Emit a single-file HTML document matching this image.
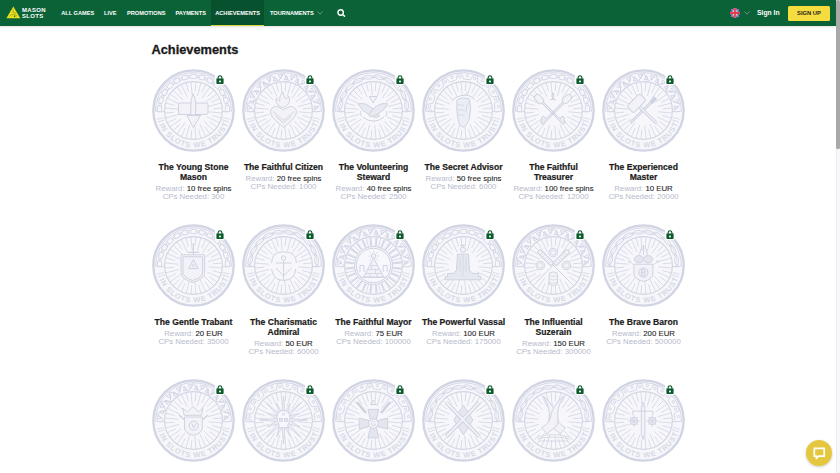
<!DOCTYPE html>
<html><head><meta charset="utf-8"><style>
*{margin:0;padding:0;box-sizing:border-box}
html,body{width:840px;height:473px;overflow:hidden;background:#fff;font-family:"Liberation Sans",sans-serif}
.nav{position:absolute;left:0;top:0;width:836px;height:25.8px;background:#0b6237;box-shadow:0 1px 2px rgba(0,0,0,0.12)}
.nav .it{position:absolute;top:0;height:25px;line-height:26px;color:#fff;font-weight:700;font-size:5.65px;white-space:nowrap}
.act{position:absolute;left:210.8px;top:0;width:53.7px;height:25.9px;background:#07512e;border-bottom:1px solid #d6d63c}
.h1{position:absolute;left:151.5px;top:42px;font-size:12.8px;font-weight:700;color:#1a1a1a;white-space:nowrap}
.card{position:absolute;width:90px;height:160px;text-align:center}
.card .b{position:absolute;left:3.5px;top:0}
.card .lock{position:absolute;left:66.5px;top:4.6px;background:#fff;border-radius:2px;padding:1px;box-sizing:content-box}
.card .txt{position:absolute;left:0;top:93.8px;width:90px}
.card .t{font-size:8.6px;line-height:9.8px;font-weight:700;color:#1b1b1b}
.card .r{margin-top:2.5px}
.card .r,.card .c{font-size:7.8px;line-height:8px;color:#262626;white-space:nowrap}
.card .r span,.card .c{color:#b6bacb}
.card .r b{font-weight:400;-webkit-text-stroke:0.1px #262626}
.card .t{-webkit-text-stroke:0.2px #1b1b1b}
.h1{-webkit-text-stroke:0.3px #1a1a1a}
.scr{position:absolute;left:836px;top:0;width:4px;height:473px;background:#f7f7fa;border-left:0.5px solid #ececf0}
.thumb{position:absolute;left:836.3px;top:0;width:3.7px;height:149px;background:#a9a9a9;border-radius:1.5px}
</style></head><body>
<svg width="0" height="0" style="position:absolute">
<defs>
<g id="base" fill="none" stroke="#d1d4e3">
<circle cx="41.5" cy="41.5" r="40.2" fill="#f7f7fb" stroke-width="2.3"/>
<path d="M3.6 41.5A37.9 37.9 0 0 1 79.4 41.5" stroke-width="0.9"/>
<circle cx="41.5" cy="41.5" r="28.9" stroke-width="1.1"/>
<path d="M56.44 42.81L69.89 43.98M60.34 46.55L69.03 48.88M55.09 47.84L67.33 53.54M57.47 52.68L64.85 57.85M52.11 52.11L61.65 61.65M52.68 57.47L57.85 64.85M47.84 55.09L53.54 67.33M46.55 60.34L48.88 69.03M42.81 56.44L43.98 69.89M39.80 60.93L39.02 69.89M37.62 55.99L34.12 69.03M33.26 59.17L29.46 67.33M32.90 53.79L25.15 64.85M27.71 55.29L21.35 61.65M29.21 50.10L18.15 57.85M23.83 49.74L15.67 53.54M27.01 45.38L13.97 48.88M22.07 43.20L13.11 43.98M26.56 40.19L13.11 39.02M22.66 36.45L13.97 34.12M27.91 35.16L15.67 29.46M25.53 30.32L18.15 25.15M30.89 30.89L21.35 21.35M30.32 25.53L25.15 18.15M35.16 27.91L29.46 15.67M36.45 22.66L34.12 13.97M40.19 26.56L39.02 13.11M43.20 22.07L43.98 13.11M45.38 27.01L48.88 13.97M49.74 23.83L53.54 15.67M50.10 29.21L57.85 18.15M55.29 27.71L61.65 21.35M53.79 32.90L64.85 25.15M59.17 33.26L67.33 29.46M55.99 37.62L69.03 34.12M60.93 39.80L69.89 39.02" stroke-width="0.8"/>
<path d="M3 41.8Q8 43.5 12.8 42.5M80 41.8Q75 43.5 70.2 42.5" stroke-width="1"/>
<path d="M12.97 50.77L6.03 53.03M12.33 48.50L5.23 50.21M70.03 50.77L76.97 53.03M70.67 48.50L77.77 50.21" stroke-width="0.8"/>
<path id="tp" d="M5.24 48.88A37.0 37.0 0 0 0 78.09 46.97" stroke="none"/>
<text font-family="Liberation Sans" font-weight="700" font-size="7.5" letter-spacing="0.75" fill="#d6d8e6" stroke="none"><textPath href="#tp" startOffset="50%" text-anchor="middle">IN SLOTS WE TRUST</textPath></text>
</g>
<g id="chain" fill="none" stroke="#d1d4e3" stroke-width="0.9"><rect x="4.65" y="37.62" width="5.8" height="4.2" rx="1.2" fill="#f7f7fb" transform="rotate(273.0 7.55 39.72)"/><ellipse cx="8.04" cy="35.45" rx="1.5" ry="1.3" transform="rotate(273.0 8.04 35.45)"/><rect x="6.17" y="29.18" width="5.8" height="4.2" rx="1.2" fill="#f7f7fb" transform="rotate(287.5 9.07 31.28)"/><ellipse cx="10.62" cy="27.27" rx="1.5" ry="1.3" transform="rotate(287.5 10.62 27.27)"/><rect x="9.77" y="21.38" width="5.8" height="4.2" rx="1.2" fill="#f7f7fb" transform="rotate(302.0 12.67 23.48)"/><ellipse cx="15.17" cy="19.99" rx="1.5" ry="1.3" transform="rotate(302.0 15.17 19.99)"/><rect x="15.20" y="14.74" width="5.8" height="4.2" rx="1.2" fill="#f7f7fb" transform="rotate(316.5 18.10 16.84)"/><ellipse cx="21.40" cy="14.08" rx="1.5" ry="1.3" transform="rotate(316.5 21.40 14.08)"/><rect x="22.12" y="9.66" width="5.8" height="4.2" rx="1.2" fill="#f7f7fb" transform="rotate(331.0 25.02 11.76)"/><ellipse cx="28.90" cy="9.92" rx="1.5" ry="1.3" transform="rotate(331.0 28.90 9.92)"/><rect x="30.09" y="6.48" width="5.8" height="4.2" rx="1.2" fill="#f7f7fb" transform="rotate(345.5 32.99 8.58)"/><ellipse cx="37.21" cy="7.77" rx="1.5" ry="1.3" transform="rotate(345.5 37.21 7.77)"/><rect x="38.60" y="5.40" width="5.8" height="4.2" rx="1.2" fill="#f7f7fb" transform="rotate(360.0 41.50 7.50)"/><ellipse cx="45.79" cy="7.77" rx="1.5" ry="1.3" transform="rotate(360.0 45.79 7.77)"/><rect x="47.11" y="6.48" width="5.8" height="4.2" rx="1.2" fill="#f7f7fb" transform="rotate(374.5 50.01 8.58)"/><ellipse cx="54.10" cy="9.92" rx="1.5" ry="1.3" transform="rotate(374.5 54.10 9.92)"/><rect x="55.08" y="9.66" width="5.8" height="4.2" rx="1.2" fill="#f7f7fb" transform="rotate(389.0 57.98 11.76)"/><ellipse cx="61.60" cy="14.08" rx="1.5" ry="1.3" transform="rotate(389.0 61.60 14.08)"/><rect x="62.00" y="14.74" width="5.8" height="4.2" rx="1.2" fill="#f7f7fb" transform="rotate(403.5 64.90 16.84)"/><ellipse cx="67.83" cy="19.99" rx="1.5" ry="1.3" transform="rotate(403.5 67.83 19.99)"/><rect x="67.43" y="21.38" width="5.8" height="4.2" rx="1.2" fill="#f7f7fb" transform="rotate(418.0 70.33 23.48)"/><ellipse cx="72.38" cy="27.27" rx="1.5" ry="1.3" transform="rotate(418.0 72.38 27.27)"/><rect x="71.03" y="29.18" width="5.8" height="4.2" rx="1.2" fill="#f7f7fb" transform="rotate(432.5 73.93 31.28)"/><ellipse cx="74.96" cy="35.45" rx="1.5" ry="1.3" transform="rotate(432.5 74.96 35.45)"/><rect x="72.55" y="37.62" width="5.8" height="4.2" rx="1.2" fill="#f7f7fb" transform="rotate(447.0 75.45 39.72)"/></g>
<g id="tri" fill="none" stroke="#d1d4e3" stroke-width="0.9"><polyline points="12.00,41.50 4.57,34.99 13.78,31.41 9.02,22.75 18.90,22.54 17.40,12.77 26.75,15.95 28.67,6.26 36.38,12.45 41.50,4.00 46.62,12.45 54.33,6.26 56.25,15.95 65.60,12.77 64.10,22.54 73.98,22.75 69.22,31.41 78.43,34.99 71.00,41.50"/><polygon points="5.51,40.62 5.90,36.12 9.82,38.73"/><polygon points="11.11,35.37 12.12,31.61 7.50,32.39"/><polygon points="7.98,28.36 9.89,24.27 12.68,28.06"/><polygon points="15.04,25.35 17.27,22.16 12.67,21.31"/><polygon points="14.50,17.69 17.69,14.50 19.01,19.01"/><polygon points="22.16,17.27 25.35,15.04 21.31,12.67"/><polygon points="24.27,9.89 28.36,7.98 28.06,12.68"/><polygon points="31.61,12.12 35.37,11.11 32.39,7.50"/><polygon points="36.12,5.90 40.62,5.51 38.73,9.82"/><polygon points="42.26,10.51 46.14,10.85 44.57,6.43"/><polygon points="48.62,6.21 52.98,7.38 49.73,10.78"/><polygon points="52.81,12.64 56.34,14.28 56.38,9.60"/><polygon points="60.26,10.77 63.96,13.37 59.74,15.45"/><polygon points="62.00,18.25 64.75,21.00 66.39,16.61"/><polygon points="69.63,19.04 72.23,22.74 67.55,23.26"/><polygon points="68.72,26.66 70.36,30.19 73.40,26.62"/><polygon points="75.62,30.02 76.79,34.38 72.22,33.27"/><polygon points="72.15,36.86 72.49,40.74 76.57,38.43"/></g>
<g id="leaf" fill="none" stroke="#d1d4e3" stroke-width="0.9"><g transform="rotate(287.0 8.31 36.24)"><ellipse cx="8.31" cy="36.24" rx="4.9" ry="1.9"/><path d="M4.11 36.24H12.51" stroke-width="0.5"/></g><g transform="rotate(305.0 11.56 26.25)"><ellipse cx="11.56" cy="26.25" rx="4.9" ry="1.9"/><path d="M7.36 26.25H15.76" stroke-width="0.5"/></g><g transform="rotate(323.0 17.74 17.74)"><ellipse cx="17.74" cy="17.74" rx="4.9" ry="1.9"/><path d="M13.54 17.74H21.94" stroke-width="0.5"/></g><g transform="rotate(341.0 26.25 11.56)"><ellipse cx="26.25" cy="11.56" rx="4.9" ry="1.9"/><path d="M22.05 11.56H30.45" stroke-width="0.5"/></g><g transform="rotate(359.0 36.24 8.31)"><ellipse cx="36.24" cy="8.31" rx="4.9" ry="1.9"/><path d="M32.04 8.31H40.44" stroke-width="0.5"/></g><g transform="rotate(377.0 46.76 8.31)"><ellipse cx="46.76" cy="8.31" rx="4.9" ry="1.9"/><path d="M42.56 8.31H50.96" stroke-width="0.5"/></g><g transform="rotate(395.0 56.75 11.56)"><ellipse cx="56.75" cy="11.56" rx="4.9" ry="1.9"/><path d="M52.55 11.56H60.95" stroke-width="0.5"/></g><g transform="rotate(413.0 65.26 17.74)"><ellipse cx="65.26" cy="17.74" rx="4.9" ry="1.9"/><path d="M61.06 17.74H69.46" stroke-width="0.5"/></g><g transform="rotate(431.0 71.44 26.25)"><ellipse cx="71.44" cy="26.25" rx="4.9" ry="1.9"/><path d="M67.24 26.25H75.64" stroke-width="0.5"/></g><g transform="rotate(449.0 74.69 36.24)"><ellipse cx="74.69" cy="36.24" rx="4.9" ry="1.9"/><path d="M70.49 36.24H78.89" stroke-width="0.5"/></g><circle cx="7.90" cy="41.50" r="1"/><circle cx="9.54" cy="31.12" r="1"/><circle cx="14.32" cy="21.75" r="1"/><circle cx="21.75" cy="14.32" r="1"/><circle cx="31.12" cy="9.54" r="1"/><circle cx="41.50" cy="7.90" r="1"/><circle cx="51.88" cy="9.54" r="1"/><circle cx="61.25" cy="14.32" r="1"/><circle cx="68.68" cy="21.75" r="1"/><circle cx="73.46" cy="31.12" r="1"/><circle cx="75.10" cy="41.50" r="1"/></g>
<g id="greek" fill="none" stroke="#d1d4e3" stroke-width="0.9"><polyline points="10.00,41.50 4.35,39.50 4.84,35.19 10.79,34.49 13.12,27.83 8.90,23.58 11.21,19.91 16.87,21.86 21.86,16.87 19.91,11.21 23.58,8.90 27.83,13.12 34.49,10.79 35.19,4.84 39.50,4.35 41.50,10.00 48.51,10.79 51.72,5.73 55.81,7.16 55.17,13.12 61.14,16.87 66.23,13.71 69.29,16.77 66.13,21.86 69.88,27.83 75.84,27.19 77.27,31.28 72.21,34.49 73.00,41.50" stroke-linejoin="round"/><circle cx="7.71" cy="37.69" r="1.2"/><circle cx="8.28" cy="29.87" r="1.2"/><circle cx="12.71" cy="23.41" r="1.2"/><circle cx="16.61" cy="16.61" r="1.2"/><circle cx="23.41" cy="12.71" r="1.2"/><circle cx="29.87" cy="8.28" r="1.2"/><circle cx="37.69" cy="7.71" r="1.2"/><circle cx="45.44" cy="6.52" r="1.2"/><circle cx="52.73" cy="9.41" r="1.2"/><circle cx="60.23" cy="11.70" r="1.2"/><circle cx="65.54" cy="17.46" r="1.2"/><circle cx="71.30" cy="22.77" r="1.2"/><circle cx="73.59" cy="30.27" r="1.2"/><circle cx="76.48" cy="37.56" r="1.2"/></g>
<g id="lock"><path d="M2.1 4.2V3.1Q2.1 0.7 4 0.7Q5.9 0.7 5.9 3.1V4.2" fill="none" stroke="#0b5a2c" stroke-width="1.1"/><path d="M0.4 3.6H7.6V8.9H0.4Z" fill="#0b5a2c"/><rect x="3.1" y="5.6" width="1.8" height="1.7" fill="#fff"/></g>
<g id="i-trowel" fill="#f2f2f8" stroke="#cfd2e1" stroke-width="1"><rect x="26.5" y="34" width="29.5" height="11.5" rx="1.5"/><path d="M41.2 24.5Q44 30 43.8 37L43.5 46H39L38.7 37Q38.5 30 41.2 24.5Z"/><path d="M35 46.5H48.6L41.2 58.5Z"/></g>
<g id="i-heart" fill="#f2f2f8" stroke="#cfd2e1" stroke-width="1"><path d="M41.4 38.7C35 37 33 33 34.5 29C35.5 31 37 32 38 32C37 28 39 25 41 22.8C41 26 43 28 44 30C45 29 46 28 46.5 27C48.5 31 48 36 41.4 38.7Z"/><path d="M41.4 58.3C36 54 28.5 48 28.5 43C28.5 38.5 33 36.5 36 38C38.5 39 40 40 41.4 41C43 40 44.5 39 47 38C50 36.5 54.4 38.5 54.4 43C54.4 48 47 54 41.4 58.3Z"/><path d="M31 42.5L41.4 51.5L52 42.5M33.5 47L41.4 54L49.5 47" fill="none"/></g>
<g id="i-hands" stroke="#cfd2e1" stroke-width="1"><path d="M37.3 27.5H45L41.2 34Z" fill="#f2f2f8"/><path d="M26 35Q33 33 40 39L47.5 47Q44 50 39 47Q30 42 26 35Z" fill="#e8eaf2"/><path d="M56 35Q49 33 42 39L36.5 46Q39 49 44 46Q52 42 56 35Z" fill="#e8eaf2"/><path d="M30.8 48.2Q41.4 56 52 48.2" fill="none"/><path d="M29 42Q27 46 30 47M54 42Q56 46 53 47" fill="none"/></g>
<g id="i-hand" stroke="#cfd2e1" stroke-width="1"><path d="M35 31Q40 27.5 47.5 30Q49.8 40 47.2 50Q45 57 41 58.3Q37 57 36 50Q34 40 35 31Z" fill="#eceef5"/><path d="M35.5 36Q39 35 42.5 37M35.5 41Q39 40 42.5 42M36 46Q39 45 42.5 47M47 33Q44 36 44 43" fill="none" stroke-width="0.8"/><path d="M29.6 32Q35 26.5 42.6 26.3Q49 26 52.6 30.8M42.6 26.3L46 22.5" fill="none"/></g>
<g id="i-keys" fill="#f2f2f8" stroke="#cfd2e1" stroke-width="1"><g transform="rotate(-45 41 44)"><rect x="38" y="19" width="6" height="10.5" rx="3"/><path d="M40.2 29.5V60M41.8 29.5V60" fill="none"/><path d="M41.8 53H45.5V56H43.5V59H41.8" /></g><g transform="rotate(45 41 44)"><rect x="38" y="19" width="6" height="10.5" rx="3"/><path d="M40.2 29.5V60M41.8 29.5V60" fill="none"/><path d="M40.2 53H36.5V56H38.5V59H40.2"/></g><path d="M41 23.5Q43 27 41 31Q39 27 41 23.5ZM38 31Q41 29 44 31" /></g>
<g id="i-tools" fill="#f2f2f8" stroke="#cfd2e1" stroke-width="1"><path d="M53.2 29.3L28.4 54.1" stroke-width="2.8" fill="none"/><path d="M53.2 29.3L28.4 54.1" stroke="#f2f2f8" stroke-width="0.9" fill="none"/><path d="M49 33.5L53.8 28.7" stroke-width="4.2" fill="none"/><path d="M37.9 38.1L54.4 54.1" stroke-width="3.4" fill="none"/><path d="M37.9 38.1L54.4 54.1" stroke="#f2f2f8" stroke-width="1.4" fill="none"/><rect x="25.5" y="29.5" width="18" height="9.5" rx="2" transform="rotate(-45 34.5 34.2)"/></g>
<g id="i-shield" fill="#f2f2f8" stroke="#cfd2e1" stroke-width="1"><path d="M41.4 19V31M35.5 28.4H47.3" fill="none" stroke-width="1.2"/><path d="M29 30.8H52.6V48.5Q52.6 55 40.8 58.6Q29 55 29 48.5Z"/><path d="M31 32.8H50.6V48Q50.6 53.5 40.8 56.5Q31 53.5 31 48Z" fill="none"/><path d="M41.4 35.5L46.1 44.5H36.7Z" fill="none"/><circle cx="41.4" cy="41.5" r="1.2" fill="none"/></g>
<g id="i-anchor" fill="none" stroke="#cfd2e1" stroke-width="1"><path d="M29.6 39Q29.6 27.8 41.8 27.8Q54.4 27.8 54.4 39"/><circle cx="41.6" cy="34" r="2.2"/><path d="M41.6 36.2V56.5M33.7 39H49.7M29.6 45Q31 56.2 41.6 56.5Q52.5 56.2 53.8 45M34 44L41.6 52L49.5 44"/></g>
<g id="i-pyramid" fill="#f2f2f8" stroke="#cfd2e1" stroke-width="1"><circle cx="41.5" cy="41.5" r="19" fill="#f8f8fc"/><path d="M60.83 44.05L69.26 45.15M59.52 48.96L67.37 52.22M56.97 53.37L63.71 58.55M53.37 56.97L58.55 63.71M48.96 59.52L52.22 67.37M44.05 60.83L45.15 69.26M38.95 60.83L37.85 69.26M34.04 59.52L30.78 67.37M29.63 56.97L24.45 63.71M26.03 53.37L19.29 58.55M23.48 48.96L15.63 52.22M22.17 44.05L13.74 45.15M22.17 38.95L13.74 37.85M23.48 34.04L15.63 30.78M26.03 29.63L19.29 24.45M29.63 26.03L24.45 19.29M34.04 23.48L30.78 15.63M38.95 22.17L37.85 13.74M44.05 22.17L45.15 13.74M48.96 23.48L52.22 15.63M53.37 26.03L58.55 19.29M56.97 29.63L63.71 24.45M59.52 34.04L67.37 30.78M60.83 38.95L69.26 37.85" stroke-width="1.1" fill="none"/><circle cx="41.5" cy="41.5" r="17.2" fill="none"/><path d="M41.6 34L31.5 53.2H51.7Z"/><path d="M37.5 41.5H45.7M35.5 45.5H47.7M33.5 49.5H49.7M39.5 41.5V45.5M43.5 45.5V49.5M38 49.5V53.2M45 49.5V53.2" fill="none" stroke-width="0.8"/><circle cx="41.6" cy="32" r="2.3"/><path d="M41.6 26.5V28.8M35.8 32H38.3M44.9 32H47.4M37.2 27.6L39 29.4M46 27.6L44.2 29.4M37.2 36.4L39 34.6M46 36.4L44.2 34.6" fill="none" stroke-width="0.7"/><path d="M28 48V41.5H32V48M51.2 48V41.5H55.2V48" fill="none"/><path d="M28 53.2H55" fill="none"/></g>
<g id="i-vassal" fill="#e6e8f0" stroke="#cfd2e1" stroke-width="1"><circle cx="41" cy="25.8" r="2.6" fill="#f2f2f8"/><path d="M41 20V22.6M38 21.5H44" fill="none" stroke-width="0.8"/><path d="M35.5 30.2H46.5L47.5 46.5L51 49.5H56.5V52.5H58.8V55.8H23.2V52.5H25.5V49.5H31L34.5 46.5Z"/><path d="M41 30.5V52.5M38 33V48M44 33V48" fill="none" stroke-width="0.7"/></g>
<g id="i-coins" fill="#f2f2f8" stroke="#cfd2e1" stroke-width="1"><path d="M25 25L57.5 57.5M57.5 25L25 57.5" fill="none"/><g transform="rotate(-45 33.5 33.5)"><rect x="31.3" y="24" width="4.4" height="19" rx="1"/><path d="M31.3 28H35.7M31.3 31H35.7M31.3 34H35.7M31.3 37H35.7M31.3 40H35.7" fill="none" stroke-width="0.7"/></g><g transform="rotate(45 49.5 33.5)"><rect x="47.3" y="24" width="4.4" height="19" rx="1"/><path d="M47.3 28H51.7M47.3 31H51.7M47.3 34H51.7M47.3 37H51.7M47.3 40H51.7" fill="none" stroke-width="0.7"/></g><circle cx="41.1" cy="28.6" r="4.3"/><circle cx="41.1" cy="28.6" r="2.6" fill="none" stroke-width="0.7"/><circle cx="28.3" cy="41.4" r="4.3"/><circle cx="28.3" cy="41.4" r="2.6" fill="none" stroke-width="0.7"/><circle cx="54.4" cy="41.4" r="4.3"/><circle cx="54.4" cy="41.4" r="2.6" fill="none" stroke-width="0.7"/><rect x="37" y="48" width="8.6" height="13.5" rx="3.5"/><path d="M37 51.5Q41.3 53.5 45.6 51.5M37 55Q41.3 57 45.6 55M37 58.5Q41.3 60.5 45.6 58.5" fill="none" stroke-width="0.7"/></g>
<g id="i-baron" fill="#f2f2f8" stroke="#cfd2e1" stroke-width="1"><path d="M37.5 30.5L40 22M45.5 30.5L43 22M41.5 21V31" fill="none"/><ellipse cx="37" cy="35.2" rx="4.8" ry="3.6" fill="#e4e6ef"/><ellipse cx="46" cy="35.2" rx="4.8" ry="3.6" fill="#e4e6ef"/><path d="M31.9 40.2H50.9V50Q50.9 55 41.4 57.5Q31.9 55 31.9 50Z"/><circle cx="41.4" cy="48.6" r="4.6" fill="#eceef5"/><path d="M39.6 45.6V51.6M39.6 45.6H42Q44 46 42.4 48.4Q44.6 49.2 42.4 51.6H39.6M39.6 48.4H42.4" fill="none" stroke-width="1"/><path d="M26.5 37L31.5 40.5M56.5 37L51.5 40.5M27 37H29M27 37V39M56 37H54M56 37V39" fill="none" stroke-width="0.8"/></g>
<g id="i-crown" fill="#f2f2f8" stroke="#cfd2e1" stroke-width="1"><path d="M30.8 29L35.5 33L41 27.4L46.5 33L50.9 29L49.5 36.3H32.2Z"/><path d="M32.5 38H50.3V49Q50.3 54 41.4 56.4Q32.5 54 32.5 49Z"/><circle cx="41.7" cy="46.6" r="4.5" fill="none"/><path d="M39.7 44.5L41.7 49L43.7 44.5" fill="none"/><path d="M27 36L32 40.5M56 36L51 40.5" fill="none" stroke-width="1.4"/></g>
<g id="i-sun" fill="#eceef5" stroke="#cfd2e1" stroke-width="0.8"><path d="M41.50 17.00L42.96 33.64L48.39 24.37L45.67 34.76L58.47 24.03L47.74 36.83L58.13 34.11L48.86 39.54L65.50 41.00L48.86 42.46L58.13 47.89L47.74 45.17L58.47 57.97L45.67 47.24L48.39 57.63L42.96 48.36L41.50 65.00L40.04 48.36L34.61 57.63L37.33 47.24L24.53 57.97L35.26 45.17L24.87 47.89L34.14 42.46L17.50 41.00L34.14 39.54L24.87 34.11L35.26 36.83L24.53 24.03L37.33 34.76L34.61 24.37L40.04 33.64Z"/><path d="M35 39Q35 31.5 41.5 31.5Q48 31.5 48 39Q48 43 46 45V48.7H37V45Q35 43 35 39Z" fill="#f8f8fc" stroke-width="1"/><rect x="37.3" y="39.5" width="3.3" height="2.8" fill="#e2e4ee"/><rect x="42.5" y="39.5" width="3.3" height="2.8" fill="#e2e4ee"/><path d="M41.5 33.5L43 35.3L41.5 37L40 35.3Z" fill="none"/></g>
<g id="i-cross" fill="#e4e6ef" stroke="#cfd2e1" stroke-width="1"><path d="M25 23L34 34M58 23L49 34" fill="none" stroke-width="2.6"/><path d="M38.5 25.5H44.5L41.5 21Z" fill="none"/><path d="M38.9 42.1L35.9 30.4H46.9L43.9 42.1L55.6 39.1V50.1L43.9 47.1L46.9 58.8H35.9L38.9 47.1L27.2 50.1V39.1Z"/><circle cx="41.4" cy="44.6" r="4.7" fill="#f6f6fa"/><path d="M43.3 42.8Q41.6 41.4 40 42.6Q38.8 44.6 40 46.4Q41.8 47.6 43.3 46.2V44.9H41.6" fill="none" stroke-width="0.9"/></g>
<g id="i-swords" stroke="#cfd2e1" stroke-width="1"><path d="M41.4 26.2L50.9 41L41.4 55.8L31.9 41Z" fill="#e6e8f0"/><path d="M24.2 23.3L57.4 57.6M57.4 23.3L24.2 57.6" fill="none" stroke-width="4"/><path d="M24.2 23.3L57.4 57.6M57.4 23.3L24.2 57.6" fill="none" stroke="#f2f2f8" stroke-width="2"/></g>
<g id="i-horns" fill="#f2f2f8" stroke="#cfd2e1" stroke-width="1"><path d="M31.3 17Q39 30 37 40Q36 47 45 52L48 55L53.5 48.5Q46 45 44.5 38Q43 27 31.3 17Z"/><path d="M51.5 17Q44 30 46 40Q47 47 38 52L35 55L29.5 48.5Q37 45 38.5 38Q40 27 51.5 17Z"/><path d="M26 58Q41.5 53 57 58M27 62H56M25 60Q41.5 56 58 60" fill="none" stroke-width="0.8"/></g>
<g id="i-scales" fill="#f2f2f8" stroke="#cfd2e1" stroke-width="1"><circle cx="41.1" cy="24.5" r="1.3"/><path d="M39.3 27H42.9V55L41.1 60.5L39.3 55Z"/><path d="M30.8 32.1H50.9M30.8 32.1V36M50.9 32.1V36" fill="none"/><circle cx="32" cy="42" r="3.8" fill="#eceef5"/><circle cx="50.2" cy="42" r="3.8" fill="#eceef5"/><path d="M32 36V48M26 42H38M27.8 37.8L36.2 46.2M36.2 37.8L27.8 46.2M50.2 36V48M44.2 42H56.2M46 37.8L54.4 46.2M54.4 37.8L46 46.2" fill="none" stroke-width="0.7"/></g>

</defs></svg>
<div class="nav">
 <svg style="position:absolute;left:6px;top:6.1px" width="15" height="13" viewBox="0 0 15 13"><path d="M7.3 0.6L14.3 12.3H0.4Z" fill="#e8e01c"/><path d="M6.2 3.2Q8.5 4.2 7 5.5Q5.5 6.8 10 7.2" fill="none" stroke="#9a9a1e" stroke-width="0.7"/><path d="M3.6 10Q7.3 6.8 11 10" fill="none" stroke="#8f9a20" stroke-width="0.7"/><circle cx="8.6" cy="10.2" r="0.8" fill="#2f5a20"/></svg>
 <div class="it" style="left:22px;top:-3px;font-size:6px;line-height:26px;letter-spacing:0.3px">MASON</div>
 <div class="it" style="left:22px;top:3px;font-size:6px;line-height:26px;letter-spacing:0.3px">SLOTS</div>
 <div class="it" style="left:61.2px">ALL GAMES</div>
 <div class="it" style="left:104px">LIVE</div>
 <div class="it" style="left:127px">PROMOTIONS</div>
 <div class="it" style="left:175.5px">PAYMENTS</div>
 <div class="act"></div>
 <div class="it" style="left:215.2px">ACHIEVEMENTS</div>
 <div class="it" style="left:270px">TOURNAMENTS</div>
 <svg style="position:absolute;left:317px;top:11px" width="6" height="4" viewBox="0 0 6 4"><path d="M0.5 0.5L3 3.2L5.5 0.5" fill="none" stroke="#7fa58e" stroke-width="0.8"/></svg>
 <svg style="position:absolute;left:336.5px;top:9px" width="9" height="8" viewBox="0 0 9 8"><circle cx="3.6" cy="3.5" r="2.7" fill="none" stroke="#fff" stroke-width="1.4"/><path d="M5.6 5.5L8 7.6" stroke="#fff" stroke-width="1.5"/></svg>
 <svg style="position:absolute;left:730px;top:8px" width="10" height="10" viewBox="0 0 10 10"><defs><clipPath id="fc"><circle cx="5" cy="5" r="5"/></clipPath></defs><g clip-path="url(#fc)"><rect width="10" height="10" fill="#2b3e8c"/><path d="M0 0L10 10M10 0L0 10" stroke="#fff" stroke-width="1.2"/><path d="M0 0L10 10M10 0L0 10" stroke="#d8324a" stroke-width="0.6"/><path d="M0 5H10M5 0V10" stroke="#fff" stroke-width="2.7"/><path d="M0 5H10M5 0V10" stroke="#e23a4e" stroke-width="1.8"/></g></svg>
 <svg style="position:absolute;left:744px;top:10.8px" width="6" height="4" viewBox="0 0 6 4"><path d="M0.5 0.5L3 3.2L5.5 0.5" fill="none" stroke="#7fa58e" stroke-width="0.8"/></svg>
 <div class="it" style="left:757px;font-size:6.8px">Sign In</div>
 <div style="position:absolute;left:788px;top:6px;width:42px;height:15px;background:#f6dd3f;border-radius:1.5px;color:#1e1e1e;font-weight:700;font-size:5.8px;line-height:15px;text-align:center">SIGN UP</div>
</div>
<div class="h1">Achievements</div>
<div class="card" style="left:148.5px;top:69.3px"><svg class="b" width="83" height="83" viewBox="0 0 83 83"><use href="#base"/><use href="#chain"/><use href="#i-trowel"/></svg><svg class="lock" width="8" height="9" viewBox="0 0 8 9"><use href="#lock"/></svg><div class="txt"><div class="t">The Young Stone Mason</div><div class="r"><span>Reward:</span> <b>10 free spins</b></div><div class="c">CPs Needed: 300</div></div></div>
<div class="card" style="left:238.5px;top:69.3px"><svg class="b" width="83" height="83" viewBox="0 0 83 83"><use href="#base"/><use href="#tri"/><use href="#i-heart"/></svg><svg class="lock" width="8" height="9" viewBox="0 0 8 9"><use href="#lock"/></svg><div class="txt"><div class="t">The Faithful Citizen</div><div class="r"><span>Reward:</span> <b>20 free spins</b></div><div class="c">CPs Needed: 1000</div></div></div>
<div class="card" style="left:328.5px;top:69.3px"><svg class="b" width="83" height="83" viewBox="0 0 83 83"><use href="#base"/><use href="#leaf"/><use href="#i-hands"/></svg><svg class="lock" width="8" height="9" viewBox="0 0 8 9"><use href="#lock"/></svg><div class="txt"><div class="t">The Volunteering Steward</div><div class="r"><span>Reward:</span> <b>40 free spins</b></div><div class="c">CPs Needed: 2500</div></div></div>
<div class="card" style="left:418.5px;top:69.3px"><svg class="b" width="83" height="83" viewBox="0 0 83 83"><use href="#base"/><use href="#greek"/><use href="#i-hand"/></svg><svg class="lock" width="8" height="9" viewBox="0 0 8 9"><use href="#lock"/></svg><div class="txt"><div class="t">The Secret Advisor</div><div class="r"><span>Reward:</span> <b>50 free spins</b></div><div class="c">CPs Needed: 6000</div></div></div>
<div class="card" style="left:508.5px;top:69.3px"><svg class="b" width="83" height="83" viewBox="0 0 83 83"><use href="#base"/><use href="#chain"/><use href="#i-keys"/></svg><svg class="lock" width="8" height="9" viewBox="0 0 8 9"><use href="#lock"/></svg><div class="txt"><div class="t">The Faithful Treasurer</div><div class="r"><span>Reward:</span> <b>100 free spins</b></div><div class="c">CPs Needed: 12000</div></div></div>
<div class="card" style="left:598.5px;top:69.3px"><svg class="b" width="83" height="83" viewBox="0 0 83 83"><use href="#base"/><use href="#tri"/><use href="#i-tools"/></svg><svg class="lock" width="8" height="9" viewBox="0 0 8 9"><use href="#lock"/></svg><div class="txt"><div class="t">The Experienced Master</div><div class="r"><span>Reward:</span> <b>10 EUR</b></div><div class="c">CPs Needed: 20000</div></div></div>
<div class="card" style="left:148.5px;top:224.3px"><svg class="b" width="83" height="83" viewBox="0 0 83 83"><use href="#base"/><use href="#chain"/><use href="#i-shield"/></svg><svg class="lock" width="8" height="9" viewBox="0 0 8 9"><use href="#lock"/></svg><div class="txt"><div class="t">The Gentle Trabant</div><div class="r"><span>Reward:</span> <b>20 EUR</b></div><div class="c">CPs Needed: 35000</div></div></div>
<div class="card" style="left:238.5px;top:224.3px"><svg class="b" width="83" height="83" viewBox="0 0 83 83"><use href="#base"/><use href="#leaf"/><use href="#i-anchor"/></svg><svg class="lock" width="8" height="9" viewBox="0 0 8 9"><use href="#lock"/></svg><div class="txt"><div class="t">The Charismatic Admiral</div><div class="r"><span>Reward:</span> <b>50 EUR</b></div><div class="c">CPs Needed: 60000</div></div></div>
<div class="card" style="left:328.5px;top:224.3px"><svg class="b" width="83" height="83" viewBox="0 0 83 83"><use href="#base"/><use href="#tri"/><use href="#i-pyramid"/></svg><svg class="lock" width="8" height="9" viewBox="0 0 8 9"><use href="#lock"/></svg><div class="txt"><div class="t">The Faithful Mayor</div><div class="r"><span>Reward:</span> <b>75 EUR</b></div><div class="c">CPs Needed: 100000</div></div></div>
<div class="card" style="left:418.5px;top:224.3px"><svg class="b" width="83" height="83" viewBox="0 0 83 83"><use href="#base"/><use href="#chain"/><use href="#i-vassal"/></svg><svg class="lock" width="8" height="9" viewBox="0 0 8 9"><use href="#lock"/></svg><div class="txt"><div class="t">The Powerful Vassal</div><div class="r"><span>Reward:</span> <b>100 EUR</b></div><div class="c">CPs Needed: 175000</div></div></div>
<div class="card" style="left:508.5px;top:224.3px"><svg class="b" width="83" height="83" viewBox="0 0 83 83"><use href="#base"/><use href="#tri"/><use href="#i-coins"/></svg><svg class="lock" width="8" height="9" viewBox="0 0 8 9"><use href="#lock"/></svg><div class="txt"><div class="t">The Influential Suzerain</div><div class="r"><span>Reward:</span> <b>150 EUR</b></div><div class="c">CPs Needed: 300000</div></div></div>
<div class="card" style="left:598.5px;top:224.3px"><svg class="b" width="83" height="83" viewBox="0 0 83 83"><use href="#base"/><use href="#leaf"/><use href="#i-baron"/></svg><svg class="lock" width="8" height="9" viewBox="0 0 8 9"><use href="#lock"/></svg><div class="txt"><div class="t">The Brave Baron</div><div class="r"><span>Reward:</span> <b>200 EUR</b></div><div class="c">CPs Needed: 500000</div></div></div>
<div class="card" style="left:148.5px;top:379.3px"><svg class="b" width="83" height="83" viewBox="0 0 83 83"><use href="#base"/><use href="#tri"/><use href="#i-crown"/></svg><svg class="lock" width="8" height="9" viewBox="0 0 8 9"><use href="#lock"/></svg><div class="txt"><div class="t">The Noble Viscount</div><div class="r"><span>Reward:</span> <b>250 EUR</b></div><div class="c">CPs Needed: 750000</div></div></div>
<div class="card" style="left:238.5px;top:379.3px"><svg class="b" width="83" height="83" viewBox="0 0 83 83"><use href="#base"/><use href="#greek"/><use href="#i-sun"/></svg><svg class="lock" width="8" height="9" viewBox="0 0 8 9"><use href="#lock"/></svg><div class="txt"><div class="t">The Honorable Count</div><div class="r"><span>Reward:</span> <b>300 EUR</b></div><div class="c">CPs Needed: 1000000</div></div></div>
<div class="card" style="left:328.5px;top:379.3px"><svg class="b" width="83" height="83" viewBox="0 0 83 83"><use href="#base"/><use href="#greek"/><use href="#i-cross"/></svg><svg class="lock" width="8" height="9" viewBox="0 0 8 9"><use href="#lock"/></svg><div class="txt"><div class="t">The Glorious Grand</div><div class="r"><span>Reward:</span> <b>400 EUR</b></div><div class="c">CPs Needed: 1500000</div></div></div>
<div class="card" style="left:418.5px;top:379.3px"><svg class="b" width="83" height="83" viewBox="0 0 83 83"><use href="#base"/><use href="#leaf"/><use href="#i-swords"/></svg><svg class="lock" width="8" height="9" viewBox="0 0 8 9"><use href="#lock"/></svg><div class="txt"><div class="t">The Mighty Duke</div><div class="r"><span>Reward:</span> <b>500 EUR</b></div><div class="c">CPs Needed: 2000000</div></div></div>
<div class="card" style="left:508.5px;top:379.3px"><svg class="b" width="83" height="83" viewBox="0 0 83 83"><use href="#base"/><use href="#leaf"/><use href="#i-horns"/></svg><svg class="lock" width="8" height="9" viewBox="0 0 8 9"><use href="#lock"/></svg><div class="txt"><div class="t">The Royal Prince</div><div class="r"><span>Reward:</span> <b>750 EUR</b></div><div class="c">CPs Needed: 3000000</div></div></div>
<div class="card" style="left:598.5px;top:379.3px"><svg class="b" width="83" height="83" viewBox="0 0 83 83"><use href="#base"/><use href="#greek"/><use href="#i-scales"/></svg><svg class="lock" width="8" height="9" viewBox="0 0 8 9"><use href="#lock"/></svg><div class="txt"><div class="t">The Wise King</div><div class="r"><span>Reward:</span> <b>1000 EUR</b></div><div class="c">CPs Needed: 5000000</div></div></div>
<div class="scr"></div><div class="thumb"></div>
<div style="position:absolute;left:806px;top:440px;width:26px;height:26px;border-radius:50%;background:#e5c73f;box-shadow:0 1px 3px rgba(0,0,0,0.2)"><svg style="position:absolute;left:6.5px;top:7px" width="13" height="13" viewBox="0 0 13 13"><path d="M1.3 1.3H11.2V9.2H5.6L3.4 11.4V9.2H1.3Z" fill="none" stroke="#fff" stroke-width="1.7" stroke-linejoin="round"/></svg></div>
</body></html>
